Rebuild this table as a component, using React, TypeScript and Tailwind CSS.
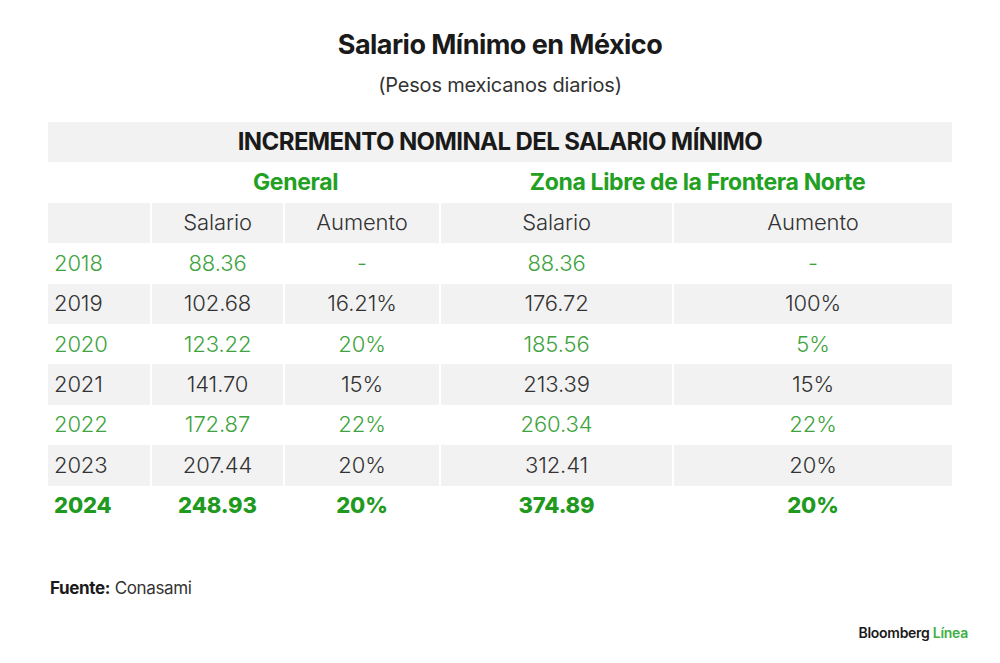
import React from "react";

const rows = [
  { y: "2018", gs: "88.36", ga: "-", zs: "88.36", za: "-" },
  { y: "2019", gs: "102.68", ga: "16.21%", zs: "176.72", za: "100%" },
  { y: "2020", gs: "123.22", ga: "20%", zs: "185.56", za: "5%" },
  { y: "2021", gs: "141.70", ga: "15%", zs: "213.39", za: "15%" },
  { y: "2022", gs: "172.87", ga: "22%", zs: "260.34", za: "22%" },
  { y: "2023", gs: "207.44", ga: "20%", zs: "312.41", za: "20%" },
  { y: "2024", gs: "248.93", ga: "20%", zs: "374.89", za: "20%" },
];

const cols = "grid grid-cols-[102px_131px_154px_231px_278px] gap-x-[2px] h-[40.4px]";

export default function App() {
  return (
    <div className="w-[1000px] h-[663px] bg-white text-[#2b2b2b] font-['Inter','Liberation_Sans',sans-serif] flex flex-col">
      <div className="pt-[28px] flex flex-col items-center">
        <h1 className="text-[27px] font-bold leading-[34px] tracking-[-0.02em] text-[#1a1a1a]">Salario Mínimo en México</h1>
        <p className="mt-[10px] text-[20px] leading-[26px] tracking-[-0.01em] text-[#333]">(Pesos mexicanos diarios)</p>
      </div>

      <div className="mt-[24px] ml-[48px] w-[904px] text-[22px] tracking-[-0.005em] font-[350]">
        <div className="h-[40.4px] bg-[#f2f2f2] flex items-center justify-center">
          <span className="text-[24px] font-bold tracking-[-0.025em] text-[#1a1a1a]">INCREMENTO NOMINAL DEL SALARIO MÍNIMO</span>
        </div>
        <div className="grid grid-cols-[102px_287px_513px] gap-x-[2px] h-[40.4px] items-center font-bold text-[#22a022] text-[23px] tracking-[-0.015em]">
          <div />
          <div className="text-center">General</div>
          <div className="text-center">Zona Libre de la Frontera Norte</div>
        </div>
        <div className={cols + " text-[#333]"}>
          <div className="bg-[#f2f2f2]" />
          {["Salario", "Aumento", "Salario", "Aumento"].map((h, i) => (
            <div key={i} className="bg-[#f2f2f2] flex items-center justify-center">{h}</div>
          ))}
        </div>
        {rows.map((r, i) => {
          const gray = i % 2 === 1;
          const last = i === rows.length - 1;
          const color = last ? "text-[#1f9a1f] font-extrabold" : gray ? "text-[#333]" : "text-[#3ea33e]";
          const bg = gray ? "bg-[#f2f2f2]" : "";
          return (
            <div key={r.y} className={cols + " " + color}>
              <div className={bg + " flex items-center pl-[6px]"}>{r.y}</div>
              {[r.gs, r.ga, r.zs, r.za].map((v, j) => (
                <div key={j} className={bg + " flex items-center justify-center"}>{v}</div>
              ))}
            </div>
          );
        })}
      </div>

      <div className="mt-[50px] ml-[50px] text-[17px] tracking-[-0.02em] text-[#333]">
        <span className="font-bold text-[#1a1a1a]">Fuente:</span> Conasami
      </div>

      <div className="mt-[21px] mr-[32px] self-end text-[14px] font-semibold tracking-[-0.02em]">
        <span className="text-[#1a1a1a]">Bloomberg</span> <span className="text-[#3cb043]">Línea</span>
      </div>
    </div>
  );
}
